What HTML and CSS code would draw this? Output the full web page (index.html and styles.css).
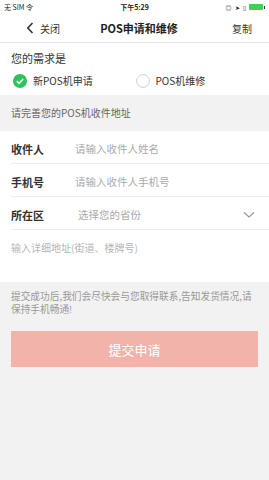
FILE: index.html
```html
<!DOCTYPE html>
<html lang="zh">
<head>
<meta charset="utf-8">
<link rel="stylesheet" href="styles.css">
</head>
<body>
<div class="statusbar">
  <div class="sb-left">无 SIM <span class="dot">令</span></div>
  <div class="sb-center">下午5:29</div>
  <div class="sb-right">
    <span class="sb-ico">◎</span><span class="sb-ico">➤</span><span class="sb-ico">▯</span>
    <span class="battery"><span class="battery-fill"></span></span><span class="battery-tip"></span>
  </div>
</div>
<div class="navbar">
  <div class="nav-left">
    <svg class="back" width="8" height="12" viewBox="0 0 8 12"><path d="M6.5 1 L1.8 6 L6.5 11" fill="none" stroke="#333" stroke-width="1.6"/></svg>
    <span>关闭</span>
  </div>
  <div class="nav-title">POS申请和维修</div>
  <div class="nav-right">复制</div>
</div>
<div class="need">
  <div class="need-title">您的需求是</div>
  <div class="radios">
    <div class="radio">
      <svg width="14" height="14" viewBox="0 0 14 14"><circle cx="7" cy="7" r="7" fill="#2fc15a"/><path d="M3.8 7.2 L6 9.3 L10.2 5" fill="none" stroke="#fff" stroke-width="1.6"/></svg>
      <span>新POS机申请</span>
    </div>
    <div class="radio">
      <svg width="14" height="14" viewBox="0 0 14 14"><circle cx="7" cy="7" r="6.4" fill="none" stroke="#cfcfcf" stroke-width="1"/></svg>
      <span>POS机维修</span>
    </div>
  </div>
</div>
<div class="section-head">请完善您的POS机收件地址</div>
<div class="form">
  <div class="row"><span class="label">收件人</span><span class="ph">请输入收件人姓名</span></div>
  <div class="row"><span class="label">手机号</span><span class="ph">请输入收件人手机号</span></div>
  <div class="row"><span class="label">所在区</span><span class="ph">选择您的省份</span>
    <svg class="chev" width="12" height="8" viewBox="0 0 12 8"><path d="M1 1.5 L6 6 L11 1.5" fill="none" stroke="#999" stroke-width="1.2"/></svg>
  </div>
  <div class="detail">输入详细地址(街道、楼牌号)</div>
</div>
<div class="bottom">
  <p class="note">提交成功后,我们会尽快会与您取得联系,告知发货情况,请保持手机畅通!</p>
  <button class="submit">提交申请</button>
</div>
</body>
</html>
```
FILE: styles.css
```css
* { box-sizing: border-box; margin: 0; padding: 0; }
html, body { background: #f2f2f2; }
body {
  width: 269px; min-height: 480px;
  font-family: "Noto Sans CJK SC", "Noto Sans", sans-serif;
  color: #333;
}
.statusbar {
  height: 14px; background: #fff;
  display: flex; align-items: center; justify-content: space-between;
  padding: 0 4px; font-size: 7px; color: #222;
}
.sb-left { flex: 1; }
.sb-center { flex: 1; text-align: center; font-weight: 600; }
.sb-right { flex: 1; display: flex; justify-content: flex-end; align-items: center; gap: 3px; font-size: 6px; }
.battery { width: 14px; height: 6px; background: #3fd24e; border-radius: 1px; display: inline-block; }
.battery-tip { width: 1.5px; height: 3px; background: #333; display: inline-block; margin-left: -2px; }
.navbar {
  height: 29px; background: #fff;
  display: flex; align-items: center; justify-content: space-between;
  padding: 0 17px 0 26px;
  border-bottom: 1px solid #e6e6e6;
}
.nav-left { display: flex; align-items: center; gap: 6px; font-size: 10px; color: #333; width: 60px; }
.nav-title { font-size: 11px; font-weight: 700; color: #222; }
.nav-right { font-size: 10px; color: #333; width: 60px; text-align: right; }
.need { background: #fff; padding: 8px 11px 0 11px; height: 52px; }
.need-title { font-size: 11px; color: #333; line-height: 14px; }
.radios { display: flex; margin-top: 8px; padding-left: 2px; }
.radio { display: flex; align-items: center; gap: 6px; font-size: 10px; color: #333; width: 144px; }
.section-head {
  height: 36px; line-height: 36px; padding-left: 11px;
  font-size: 10px; color: #666; background: #f2f2f2;
}
.form { background: #fff; padding-left: 11px; }
.row {
  height: 33px; display: flex; align-items: center;
  border-bottom: 1px solid #ececec; padding-right: 13px; padding-top: 3px;
  font-size: 10.5px;
}
.label { width: 64px; font-weight: 700; color: #333; font-size: 11px; }
.ph { color: #aaa; flex: 1; }
.row:nth-child(3) .ph { padding-left: 3px; }
.chev { margin-right: 1px; }
.detail { height: 52px; padding-top: 10px; font-size: 10px; color: #b5b5b5; }
.bottom { padding: 8px 11px 0 11px; }
.note { font-size: 9.7px; line-height: 13px; color: #999; }
.submit {
  margin-top: 15px; width: 247px; height: 36px;
  border: none; background: #f2b3ab; color: #fff;
  font-family: inherit; font-size: 13px; display: block;
}
```
